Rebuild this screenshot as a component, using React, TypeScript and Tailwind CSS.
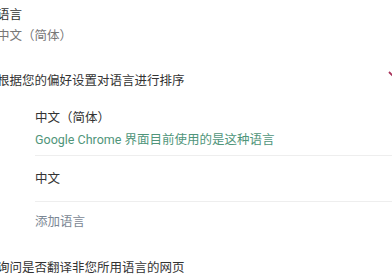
import React from "react";

function ChevronDown() {
  return (
    <svg width="16" height="16" viewBox="0 0 16 16" className="shrink-0">
      <path d="M2 5 L8 11 L14 5" fill="none" stroke="#a8325a" strokeWidth="1.8" />
    </svg>
  );
}

export default function App() {
  return (
    <div
      className="h-[274px] w-[392px] overflow-hidden bg-white text-[12.5px] leading-[20px] text-[#333]"
      style={{ fontFamily: 'Roboto, "Noto Sans CJK SC", sans-serif' }}
    >
      <div className="-ml-[3px] pt-[5px]">
        <div>语言</div>
        <div className="mt-[1px] text-[#777]">中文（简体）</div>

        <div className="mt-[25px] flex items-center justify-between">
          <span>根据您的偏好设置对语言进行排序</span>
          <span className="-mr-[11px] -mt-[12px]">
            <ChevronDown />
          </span>
        </div>

        <div className="pl-[38px]">
          <div className="mt-[17px] border-b border-[#eeeeee] pb-[5px]">
            <div>中文（简体）</div>
            <div className="mt-[2px] text-[#4f957a]">
              Google Chrome 界面目前使用的是这种语言
            </div>
          </div>
          <div className="border-b border-[#eeeeee] pt-[13px] pb-[12px]">中文</div>
          <div className="mt-[10px] text-[#7b8794]">添加语言</div>
        </div>

        <div className="mt-[26px]">询问是否翻译非您所用语言的网页</div>
      </div>
    </div>
  );
}
